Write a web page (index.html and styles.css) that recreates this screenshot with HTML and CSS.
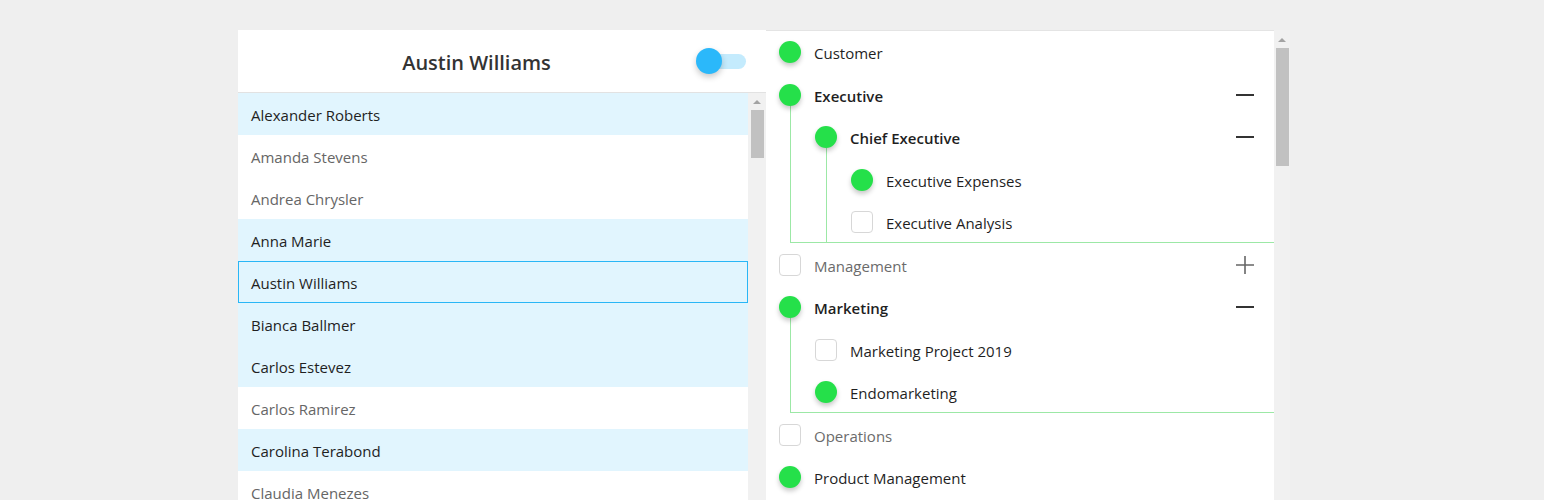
FILE: index.html
```html
<!DOCTYPE html>
<html lang="en">
<head>
<meta charset="utf-8">
<title>Roles</title>
<link rel="stylesheet" href="styles.css">
</head>
<body>
<div class="app">
  <section class="people">
    <header class="people-head">
      <h1 class="title">Austin Williams</h1>
      <div class="toggle"><span class="knob"></span></div>
    </header>
    <div class="people-body">
      <ul class="list">
        <li class="person on">Alexander Roberts</li>
        <li class="person">Amanda Stevens</li>
        <li class="person">Andrea Chrysler</li>
        <li class="person on">Anna Marie</li>
        <li class="person on selected">Austin Williams</li>
        <li class="person on">Bianca Ballmer</li>
        <li class="person on">Carlos Estevez</li>
        <li class="person">Carlos Ramirez</li>
        <li class="person on">Carolina Terabond</li>
        <li class="person">Claudia Menezes</li>
      </ul>
      <div class="scrollbar left-bar"><span class="arrow"></span><span class="thumb"></span></div>
    </div>
  </section>
  <section class="roles">
    <div class="tree">
      <div class="node"><span class="dot"></span><span class="label">Customer</span></div>
      <div class="node open"><span class="dot"></span><span class="label">Executive</span>
        <svg class="tog" width="18" height="18" viewBox="0 0 18 18"><path d="M0 9h18" stroke="#333" stroke-width="2"/></svg></div>
      <div class="children">
        <div class="node open"><span class="dot"></span><span class="label">Chief Executive</span>
          <svg class="tog" width="18" height="18" viewBox="0 0 18 18"><path d="M0 9h18" stroke="#333" stroke-width="2"/></svg></div>
        <div class="children">
          <div class="node"><span class="dot"></span><span class="label">Executive Expenses</span></div>
          <div class="node"><span class="box"></span><span class="label">Executive Analysis</span></div>
        </div>
      </div>
      <div class="node off"><span class="box"></span><span class="label">Management</span>
        <svg class="tog" width="18" height="18" viewBox="0 0 18 18"><path d="M0 9h18M9 0v18" stroke="#666" stroke-width="1.6"/></svg></div>
      <div class="node open"><span class="dot"></span><span class="label">Marketing</span>
        <svg class="tog" width="18" height="18" viewBox="0 0 18 18"><path d="M0 9h18" stroke="#333" stroke-width="2"/></svg></div>
      <div class="children">
        <div class="node"><span class="box"></span><span class="label">Marketing Project 2019</span></div>
        <div class="node"><span class="dot"></span><span class="label">Endomarketing</span></div>
      </div>
      <div class="node off"><span class="box"></span><span class="label">Operations</span></div>
      <div class="node"><span class="dot"></span><span class="label">Product Management</span></div>
    </div>
    <div class="scrollbar right-bar"><span class="arrow"></span><span class="thumb"></span></div>
  </section>
</div>
</body>
</html>
```

FILE: styles.css
```css
html, body {
  margin: 0;
  height: 100%;
  overflow: hidden;
}
body {
  background: #efefef;
  font-family: "Open Sans", "Noto Sans", "Liberation Sans", sans-serif;
  font-size: 15px;
  color: #1f1f1f;
}
.app {
  display: flex;
  padding: 30px 0 0 238px;
}
.people {
  width: 528px;
  background: #fff;
  display: flex;
  flex-direction: column;
}
.people-head {
  height: 62px;
  display: flex;
  align-items: center;
  padding-right: 20px;
  border-bottom: 1px solid #e2e2e2;
  box-sizing: border-box;
  height: 63px;
}
.title {
  flex: 1;
  margin: 0;
  padding: 2px 0 0 15px;
  text-align: center;
  font-size: 20px;
  font-weight: 600;
  color: #333;
}
.toggle {
  position: relative;
  width: 46px;
  height: 15px;
  border-radius: 8px;
  background: #c4ebfd;
}
.knob {
  position: absolute;
  left: -4px;
  top: -6px;
  width: 26px;
  height: 26px;
  border-radius: 50%;
  background: #2bb8fa;
  box-shadow: 0 3px 6px rgba(0, 0, 0, 0.22);
}
.people-body {
  display: flex;
  height: 420px;
}
.list {
  flex: 1;
  margin: 0;
  padding: 0;
  list-style: none;
}
.person {
  height: 42px;
  padding: 2px 0 0 13px;
  line-height: 40px;
  color: #666;
  box-sizing: border-box;
}
.person.on {
  background: #e1f5fe;
  color: #1f1f1f;
}
.person.selected {
  border: 1px solid #29b6f6;
  padding: 1px 0 0 12px;
  line-height: 40px;
}
.scrollbar {
  position: relative;
  background: #f1f1f1;
  display: flex;
  flex-direction: column;
  align-items: center;
}
.left-bar {
  width: 18px;
}
.right-bar {
  width: 16px;
  height: 470px;
}
.arrow {
  width: 0;
  height: 0;
  border-left: 4px solid transparent;
  border-right: 4px solid transparent;
  border-bottom: 4px solid #a3a3a3;
}
.left-bar .arrow {
  margin-top: 7px;
}
.left-bar .thumb {
  margin-top: 6px;
  width: 13px;
  height: 48px;
  background: #c1c1c1;
}
.right-bar .arrow {
  margin-top: 8px;
}
.right-bar .thumb {
  margin-top: 6px;
  width: 13px;
  height: 118px;
  background: #c1c1c1;
}
.roles {
  display: flex;
  width: 524px;
}
.tree {
  width: 508px;
  background: #fff;
  border-top: 1px solid #e4e4e4;
  padding-left: 13px;
  box-sizing: border-box;
}
.node {
  height: 42.5px;
  display: flex;
  align-items: center;
  padding-right: 20px;
}
.dot, .box {
  position: relative;
  z-index: 1;
  flex: none;
  width: 22px;
  height: 22px;
  box-sizing: border-box;
  margin-right: 13px;
}
.dot {
  border-radius: 50%;
  background: #25e04a;
  box-shadow: 0 3px 5px rgba(0, 0, 0, 0.22);
}
.box {
  border: 1px solid #d7d7d7;
  border-radius: 4px;
  background: #fff;
}
.label {
  flex: 1;
  padding-top: 2px;
}
.node.open .label {
  font-weight: 600;
}
.node.off .label {
  color: #6b6b6b;
}
.tog {
  flex: none;
  display: block;
}
.children {
  position: relative;
  margin-left: 11px;
  padding-left: 25px;
}
.children::before {
  content: "";
  position: absolute;
  left: 0;
  right: 0;
  top: -11px;
  bottom: 1px;
  border-left: 1px solid #9ce8a6;
  border-bottom: 1px solid #9ce8a6;
}
```
